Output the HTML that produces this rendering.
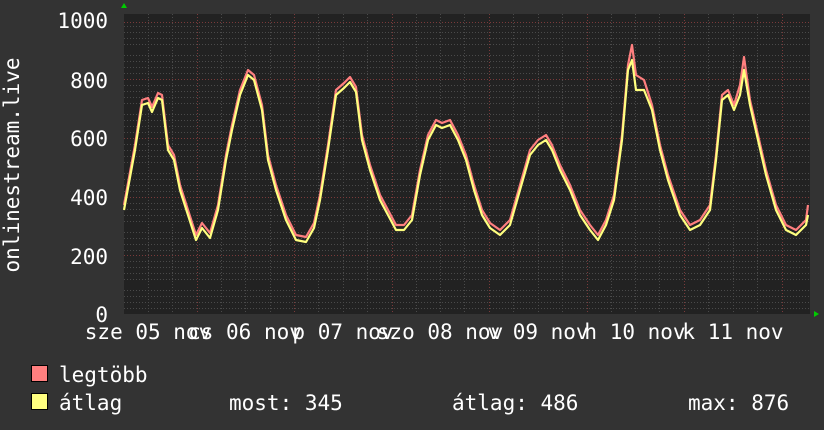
<!DOCTYPE html>
<html><head><meta charset="utf-8"><style>
html,body{margin:0;padding:0;background:#333;}
svg{display:block;font-family:"DejaVu Sans Mono","Liberation Mono",monospace;}
</style></head><body>
<svg width="824" height="430" viewBox="0 0 824 430" xmlns="http://www.w3.org/2000/svg">
<rect width="824" height="430" fill="#333"/>
<rect x="124" y="14" width="686" height="300" fill="#222"/>
<g stroke="#4a4a4a" stroke-width="1" stroke-dasharray="1,2" shape-rendering="crispEdges">
<path d="M124 26.5H810M124 32.5H810M124 38.5H810M124 44.5H810M124 55.5H810M124 61.5H810M124 67.5H810M124 73.5H810
M124 85.5H810M124 91.5H810M124 97.5H810M124 103.5H810M124 114.5H810M124 120.5H810M124 126.5H810M124 132.5H810
M124 144.5H810M124 150.5H810M124 156.5H810M124 162.5H810M124 173.5H810M124 179.5H810M124 185.5H810M124 191.5H810
M124 203.5H810M124 209.5H810M124 215.5H810M124 221.5H810M124 232.5H810M124 238.5H810M124 244.5H810M124 250.5H810
M124 261.5H810M124 267.5H810M124 273.5H810M124 279.5H810M124 290.5H810M124 296.5H810M124 302.5H810M124 308.5H810"/>
<path d="M148.5 14V314M172.5 14V314M221.5 14V314M245.5 14V314M270.5 14V314M318.5 14V314M343.5 14V314M367.5 14V314
M416.5 14V314M440.5 14V314M464.5 14V314M513.5 14V314M538.5 14V314M562.5 14V314M611.5 14V314M635.5 14V314M659.5 14V314
M708.5 14V314M733.5 14V314M757.5 14V314"/>
</g>
<g stroke="#7a3a3a" stroke-width="1" stroke-dasharray="1,2" shape-rendering="crispEdges">
<path d="M124 22.5H810M124 79.5H810M124 138.5H810M124 197.5H810M124 255.5H810"/>
<path d="M197.5 14V314M294.5 14V314M392.5 14V314M489.5 14V314M587.5 14V314M684.5 14V314M782.5 14V314"/>
</g>
<g fill="none" stroke-linejoin="round" stroke-width="2.2">
<polyline stroke="#ff7f7f" transform="translate(0,-5)" points="124,210 135,150 142,105 148,103 152,112 158,98 162,100 168,150 174,160 180,190 188,215 196,240 202,228 210,238 218,210 226,160 232,130 240,95 248,75 254,80 262,110 268,160 276,190 286,220 296,240 306,242 314,228 320,200 328,150 336,95 344,88 350,82 356,92 362,140 370,170 380,200 388,215 396,230 404,230 412,220 420,175 428,140 436,125 442,128 450,125 458,140 466,160 474,190 482,215 490,228 500,235 510,225 520,190 530,155 538,145 546,140 552,150 560,170 570,190 580,215 590,230 598,240 606,225 614,200 622,140 628,70 632,50 636,80 644,85 652,110 660,150 668,180 680,215 690,230 700,225 710,210 716,160 722,100 728,95 734,110 740,90 744,62 750,105 758,140 766,175 776,210 786,230 796,235 806,225 808,210"/>
<polyline stroke="#ffff7f" points="124,210 135,150 142,105 148,103 152,112 158,98 162,100 168,150 174,160 180,190 188,215 196,240 202,228 210,238 218,210 226,160 232,130 240,95 248,75 254,80 262,110 268,160 276,190 286,220 296,240 306,242 314,228 320,200 328,150 336,95 344,88 350,82 356,92 362,140 370,170 380,200 388,215 396,230 404,230 412,220 420,175 428,140 436,125 442,128 450,125 458,140 466,160 474,190 482,215 490,228 500,235 510,225 520,190 530,155 538,145 546,140 552,150 560,170 570,190 580,215 590,230 598,240 606,225 614,200 622,140 628,70 632,60 636,90 644,90 652,110 660,150 668,180 680,215 690,230 700,225 710,210 716,160 722,100 728,95 734,110 740,95 744,70 750,105 758,140 766,175 776,210 786,230 796,235 806,225 808,215"/>
</g>
<path d="M121 8L124 3L127 8Z" fill="#0c0"/>
<path d="M814 311L819 314L814 317Z" fill="#0c0"/>
<g fill="#fff" font-size="21" text-anchor="end">
<text x="108" y="28">1000</text>
<text x="108" y="88">800</text>
<text x="108" y="146">600</text>
<text x="108" y="205">400</text>
<text x="108" y="264">200</text>
<text x="108" y="322">0</text>
</g>
<text fill="#fff" font-size="21" transform="translate(19,165) rotate(-90)" text-anchor="middle">onlinestream.live</text>
<g fill="#fff" font-size="21" text-anchor="middle">
<text x="148" y="339">sze 05 nov</text>
<text x="245" y="339">cs 06 nov</text>
<text x="343" y="339">p 07 nov</text>
<text x="440" y="339">szo 08 nov</text>
<text x="538" y="339">v 09 nov</text>
<text x="635" y="339">h 10 nov</text>
<text x="733" y="339">k 11 nov</text>
</g>
<rect x="31.5" y="365.5" width="16" height="16" fill="#ff7f7f" stroke="#000"/>
<rect x="31.5" y="393.5" width="16" height="16" fill="#ffff7f" stroke="#000"/>
<g fill="#fff" font-size="21">
<text x="59" y="382">legtöbb</text>
<text x="59" y="410">átlag</text>
<text x="229" y="410">most: 345</text>
<text x="452" y="410">átlag: 486</text>
<text x="688" y="410">max: 876</text>
</g>
</svg>
</body></html>
